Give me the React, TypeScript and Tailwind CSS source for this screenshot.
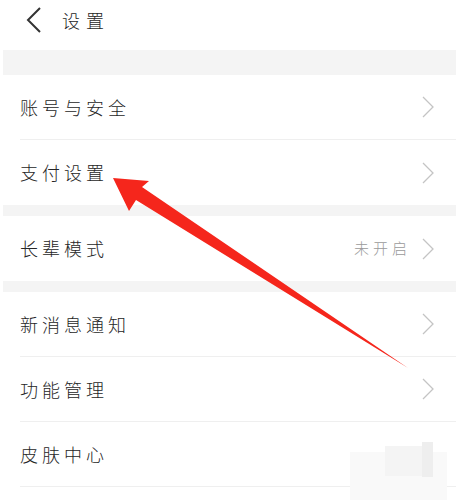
type Row = { label: string; value?: string; arrow?: boolean }

const groups: Row[][] = [
  [
    { label: '账号与安全', arrow: true },
    { label: '支付设置', arrow: true },
  ],
  [{ label: '长辈模式', value: '未开启', arrow: true }],
  [
    { label: '新消息通知', arrow: true },
    { label: '功能管理', arrow: true },
    { label: '皮肤中心' },
  ],
]

function Chevron() {
  return (
    <svg width="12" height="22" viewBox="0 0 12 22" fill="none" className="shrink-0">
      <path d="M1 1 L11 11 L1 21" stroke="#c4c4c4" strokeWidth="1.3" />
    </svg>
  )
}

function SettingRow({ row, last }: { row: Row; last: boolean }) {
  return (
    <div className="pl-[17px]">
      <div className={`h-[65px] flex items-center pr-[22px] ${last ? '' : 'border-b border-[#efefef]'}`}>
        <span className="flex-1 text-[18px] tracking-[4px] text-[#262626] font-light">{row.label}</span>
        {row.value && <span className="mr-[11px] text-[15px] tracking-[4px] text-[#9a9a9a] font-light">{row.value}</span>}
        {row.arrow && <Chevron />}
      </div>
    </div>
  )
}

export default function App() {
  return (
    <div
      className="relative w-[462px] h-[503px] overflow-hidden bg-white"
      style={{ fontFamily: '"Noto Sans CJK SC", "Noto Sans", sans-serif' }}
    >
      {/* header */}
      <div className="h-[50px] flex items-center pl-[26px] pb-[10px]">
        <svg width="15" height="26" viewBox="0 0 15 26" fill="none" className="shrink-0">
          <path d="M14 1 L2 13 L14 25" stroke="#333" strokeWidth="2" />
        </svg>
        <span className="ml-[21px] text-[18px] tracking-[6px] text-[#262626] font-light">设置</span>
      </div>

      <div className="pl-[3px] pr-[6px]">
        <div className="h-[25px] bg-[#f4f4f4]" />
        {groups.map((g, gi) => (
          <div key={gi}>
            {gi > 0 && <div className="h-[11px] bg-[#f4f4f4]" />}
            {g.map((row, ri) => (
              <SettingRow key={row.label} row={row} last={ri === g.length - 1 && gi !== groups.length - 1} />
            ))}
          </div>
        ))}
      </div>

      {/* blurred mosaic watermark */}
      <div className="absolute left-[350px] top-[452px] w-[97px] h-[48px] bg-[#f9f9f9]" />
      <div className="absolute left-[385px] top-[446px] w-[48px] h-[30px] bg-[#f4f4f4]" />
      <div className="absolute left-[422px] top-[442px] w-[11px] h-[35px] bg-[#eeeeee]" />

      {/* red annotation arrow */}
      <svg className="absolute inset-0 pointer-events-none" width="462" height="503" viewBox="0 0 462 503">
        <polygon points="113,178 149,181 142,187 408,368 136,200 129,211" fill="#f5261c" />
      </svg>
    </div>
  )
}
